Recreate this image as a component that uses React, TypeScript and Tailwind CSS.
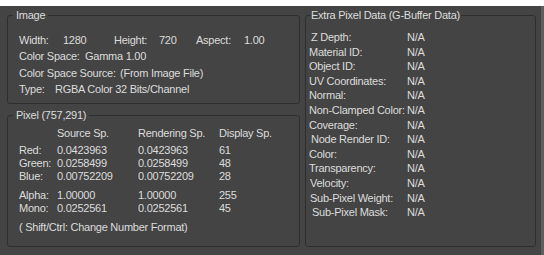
const font = "font-['Liberation_Sans',Tahoma,Arial,sans-serif]";

const extra: [string, string][] = [
  ["Z Depth:", "pl-[2px]"],
  ["Material ID:", ""],
  ["Object ID:", ""],
  ["UV Coordinates:", ""],
  ["Normal:", ""],
  ["Non-Clamped Color:", ""],
  ["Coverage:", ""],
  ["Node Render ID:", "pl-[2px]"],
  ["Color:", ""],
  ["Transparency:", ""],
  ["Velocity:", "pl-[1px]"],
  ["Sub-Pixel Weight:", "pl-[1px]"],
  ["Sub-Pixel Mask:", "pl-[3px]"],
];

const pixelRows = [
  ["Red:", "0.0423963", "0.0423963", "61"],
  ["Green:", "0.0258499", "0.0258499", "48"],
  ["Blue:", "0.00752209", "0.00752209", "28"],
];

const pixelRows2 = [
  ["Alpha:", "1.00000", "1.00000", "255"],
  ["Mono:", "0.0252561", "0.0252561", "45"],
];

function PixelRow({ r }: { r: string[] }) {
  return (
    <div className="grid grid-cols-[38px_81px_81px_auto] h-[13px] leading-[13px]">
      <span>{r[0]}</span>
      <span>{r[1]}</span>
      <span>{r[2]}</span>
      <span>{r[3]}</span>
    </div>
  );
}

export default function App() {
  return (
    <div className={`w-[544px] h-[255px] bg-[#444444] text-[11px] tracking-[-0.25px] text-[#dcdcdc] whitespace-nowrap ${font} flex flex-col`}>
      <div className="h-[6px] bg-white shrink-0" />
      <div className="flex flex-1 gap-[5px] pl-[7px] pt-[3px] border-r-[3px] border-[#5e5e5e]">
        <div className="flex flex-col gap-[5px] w-[293px] shrink-0">
          {/* Image */}
          <fieldset className="h-[95px] border border-[#2e2e2e] rounded-[3px]">
            <legend className="ml-[5px] px-[3px] leading-[13px]">Image</legend>
            <div className="pl-[11px] pt-[10px] leading-[16.4px]">
              <div className="flex">
                <span className="w-[44px] shrink-0">Width:</span>
                <span className="w-[51px] shrink-0">1280</span>
                <span className="w-[45px] shrink-0">Height:</span>
                <span className="w-[37px] shrink-0">720</span>
                <span className="w-[48px] shrink-0">Aspect:</span>
                <span>1.00</span>
              </div>
              <div className="flex">
                <span className="w-[66px] shrink-0">Color Space:</span>
                <span>Gamma 1.00</span>
              </div>
              <div className="flex">
                <span className="w-[101px] shrink-0">Color Space Source:</span>
                <span>(From Image File)</span>
              </div>
              <div className="flex">
                <span className="w-[36px] shrink-0">Type:</span>
                <span>RGBA Color 32 Bits/Channel</span>
              </div>
            </div>
          </fieldset>

          {/* Pixel */}
          <fieldset className="h-[138px] border border-[#2e2e2e] rounded-[3px]">
            <legend className="ml-[5px] px-[3px] leading-[13px]">Pixel (757,291)</legend>
            <div className="pl-[11px] pt-[5px]">
              <div className="grid grid-cols-[38px_81px_81px_auto] h-[13px] leading-[13px] mb-[4px]">
                <span />
                <span>Source Sp.</span>
                <span>Rendering Sp.</span>
                <span>Display Sp.</span>
              </div>
              {pixelRows.map((r) => (
                <PixelRow key={r[0]} r={r} />
              ))}
              <div className="h-[6px]" />
              {pixelRows2.map((r) => (
                <PixelRow key={r[0]} r={r} />
              ))}
              <div className="mt-[6px] leading-[13px]">( Shift/Ctrl: Change Number Format)</div>
            </div>
          </fieldset>
        </div>

        {/* Extra */}
        <fieldset className="w-[231px] h-[238px] border border-[#2e2e2e] rounded-[3px]">
          <legend className="ml-[4px] px-[1px] leading-[13px]">Extra Pixel Data (G-Buffer Data)</legend>
          <div className="pl-[3px] pt-[8px]">
            {extra.map(([label, pad]) => (
              <div key={label} className="flex h-[14.6px] leading-[14.6px]">
                <span className={`w-[98px] shrink-0 ${pad}`}>{label}</span>
                <span>N/A</span>
              </div>
            ))}
          </div>
        </fieldset>
      </div>
    </div>
  );
}
